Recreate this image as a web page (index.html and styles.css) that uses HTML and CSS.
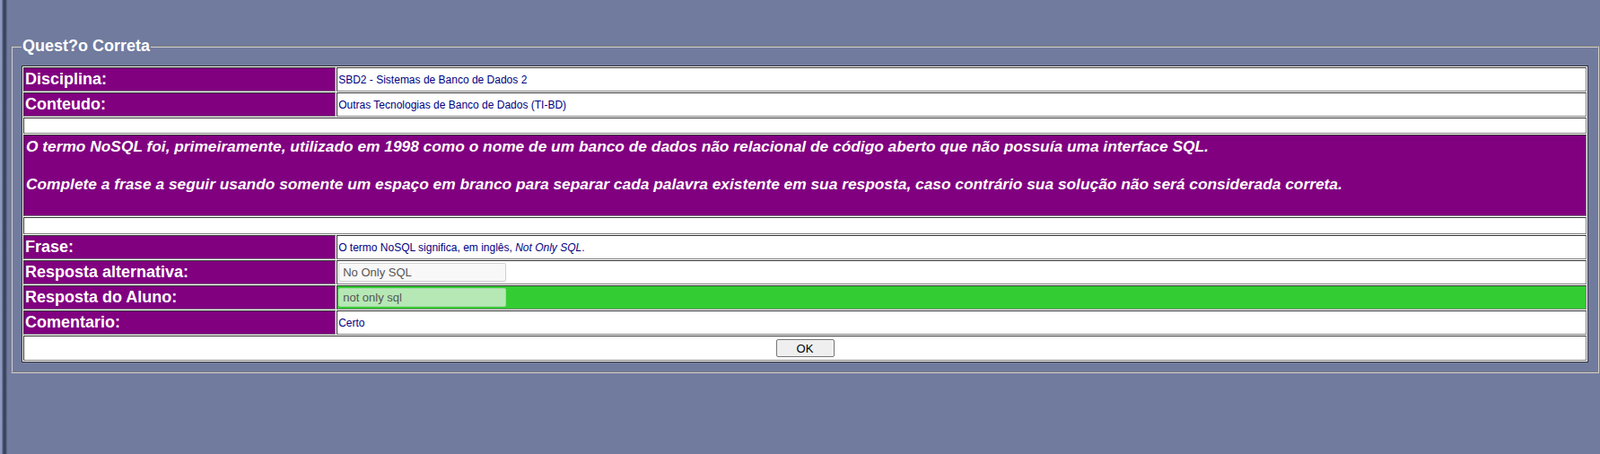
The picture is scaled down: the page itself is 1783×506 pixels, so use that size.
FILE: index.html
```html
<!DOCTYPE html>
<html lang="pt">
<head>
<meta charset="utf-8">
<title>Questão Correta</title>
<link rel="stylesheet" href="styles.css">
</head>
<body>
<fieldset class="box">
  <legend class="box-title">Quest?o Correta</legend>
  <table class="grid">
    <tr>
      <td class="label">Disciplina:</td>
      <td class="value">SBD2 - Sistemas de Banco de Dados 2</td>
    </tr>
    <tr>
      <td class="label">Conteudo:</td>
      <td class="value">Outras Tecnologias de Banco de Dados (TI-BD)</td>
    </tr>
    <tr><td class="blank" colspan="2"></td></tr>
    <tr>
      <td class="question" colspan="2">O termo NoSQL foi, primeiramente, utilizado em 1998 como o nome de um banco de dados não relacional de código aberto que não possuía uma interface SQL.<br><br>Complete a frase a seguir usando somente um espaço em branco para separar cada palavra existente em sua resposta, caso contrário sua solução não será considerada correta.<br><br></td>
    </tr>
    <tr><td class="blank blank-low" colspan="2"></td></tr>
    <tr>
      <td class="label">Frase:</td>
      <td class="value">O termo NoSQL significa, em inglês, <i>Not Only SQL</i>.</td>
    </tr>
    <tr>
      <td class="label">Resposta alternativa:</td>
      <td class="value"><input class="field" type="text" value="No Only SQL" readonly></td>
    </tr>
    <tr>
      <td class="label">Resposta do Aluno:</td>
      <td class="value value-ok"><input class="field field-ok" type="text" value="not only sql" readonly></td>
    </tr>
    <tr>
      <td class="label">Comentario:</td>
      <td class="value">Certo</td>
    </tr>
    <tr>
      <td class="actions" colspan="2"><button class="btn" type="button">OK</button></td>
    </tr>
  </table>
</fieldset>
</body>
</html>
```
FILE: styles.css
```css
html, body {
  margin: 0;
  padding: 0;
}
body {
  background: #717b9e linear-gradient(to right, #8b97bd 0, #8b97bd 2px, #505a78 3px, #323a55 5px, #4a5473 7px, #717b9e 8px) no-repeat left top / 8px 100%;
  min-height: 506px;
  padding-top: 41px;
  box-sizing: border-box;
  font-family: "Liberation Sans", Arial, sans-serif;
}
.box {
  margin: 0 1px 0 12px;
  padding: 11px 10px 10px 10px;
  border: 2px groove #d0d0d0;
  min-width: 0;
}
.box-title {
  color: #ffffff;
  font-weight: bold;
  font-size: 18px;
  line-height: 21px;
  padding: 0 1px;
}
.grid {
  width: 100%;
  border-collapse: separate;
  border-spacing: 1px;
  border: 1px solid #333333;
  background: #ffffff;
}
.grid td {
  border-style: solid;
  border-width: 1px;
  border-color: #333333 #808080 #808080 #333333;
}
.label {
  width: 20%;
  background: #800080;
  color: #ffffff;
  font-weight: bold;
  font-size: 18px;
  line-height: 19px;
  height: 19px;
  padding: 3px 2px 3px 1px;
}
.value {
  background: #ffffff;
  color: #000080;
  font-size: 12px;
  line-height: 14px;
  padding: 1px 1px;
}
.value-ok {
  background: #33cc33;
}
.blank {
  background: #ffffff;
  height: 16px;
  padding: 0;
}
.blank-low {
  height: 17px;
}
.question {
  background: #800080;
  color: #ffffff;
  font-weight: bold;
  font-style: italic;
  font-size: 17.33px;
  line-height: 21px;
  padding: 2px 2px 3px 2px;
}
.field {
  box-sizing: border-box;
  width: 187px;
  height: 21px;
  margin: 0;
  padding: 1px 4px;
  border: 1px solid #d0d0d0;
  border-radius: 2px;
  background: #f8f8f8;
  color: #555555;
  font-family: "Liberation Sans", Arial, sans-serif;
  font-size: 13px;
  display: block;
}
.field-ok {
  background: #b6e8b6;
  border-color: #a8d8a8;
}
.actions {
  background: #ffffff;
  text-align: center;
  padding: 2px;
  height: 22px;
}
.btn {
  width: 65px;
  height: 20px;
  padding: 0;
  border: 1px solid #767676;
  border-radius: 2px;
  background: #efefef;
  color: #000000;
  font-family: "Liberation Sans", Arial, sans-serif;
  font-size: 13px;
  vertical-align: middle;
}
```
